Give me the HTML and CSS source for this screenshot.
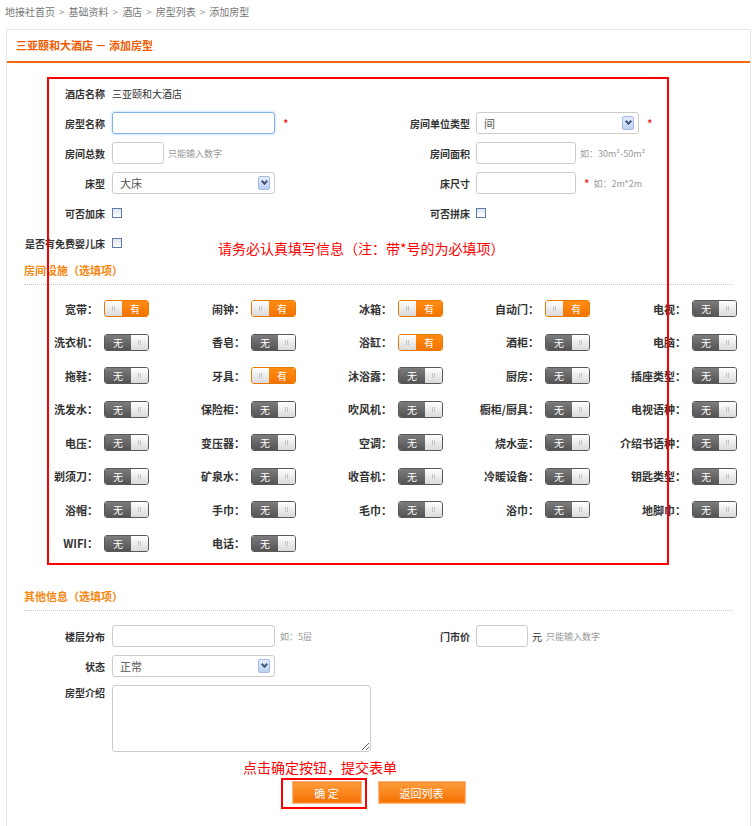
FILE: index.html
```html
<!DOCTYPE html>
<html lang="zh-CN">
  <head>
    <meta charset="UTF-8" />
    <title>添加房型</title>
    <link rel="stylesheet" href="styles.css">
  </head>
  <body>
    <div class="crumb">
      地接社首页<span class="sep">&gt;</span>基础资料<span class="sep">&gt;</span>酒店<span class="sep">&gt;</span>房型列表<span class="sep">&gt;</span>添加房型
    </div>

    <div class="panel">
      <div class="panel-head">三亚颐和大酒店 － 添加房型</div>

      <!-- basic info -->
      <div class="form">
        <div class="row">
          <div class="field"><label>酒店名称</label><span class="val">三亚颐和大酒店</span></div>
        </div>
        <div class="row">
          <div class="field"><label>房型名称</label><span class="input w163 focus"></span><span class="req">*</span></div>
          <div class="field right"><label>房间单位类型</label><span class="input select w163">间<i class="arrow"></i></span><span class="req">*</span></div>
        </div>
        <div class="row">
          <div class="field"><label>房间总数</label><span class="input w52"></span><span class="hint">只能输入数字</span></div>
          <div class="field right"><label>房间面积</label><span class="input w100"></span><span class="hint">如：30m²-50m²</span></div>
        </div>
        <div class="row">
          <div class="field"><label>床型</label><span class="input select w163">大床<i class="arrow"></i></span></div>
          <div class="field right"><label>床尺寸</label><span class="input w100"></span><span class="req">*</span><span class="hint">如：2m*2m</span></div>
        </div>
        <div class="row">
          <div class="field"><label>可否加床</label><span class="check"></span></div>
          <div class="field right"><label>可否拼床</label><span class="check"></span></div>
        </div>
        <div class="row">
          <div class="field"><label>是否有免费婴儿床</label><span class="check"></span></div>
        </div>
      </div>

      <h3 class="sec">房间设施（选填项）</h3>
      <div class="facilities">
        <div class="fac"><label>宽带：</label><span class="sw on"><i></i><b>有</b></span></div>
        <div class="fac"><label>闹钟：</label><span class="sw on"><i></i><b>有</b></span></div>
        <div class="fac"><label>冰箱：</label><span class="sw on"><i></i><b>有</b></span></div>
        <div class="fac"><label>自动门：</label><span class="sw on"><i></i><b>有</b></span></div>
        <div class="fac"><label>电视：</label><span class="sw"><b>无</b><i></i></span></div>

        <div class="fac"><label>洗衣机：</label><span class="sw"><b>无</b><i></i></span></div>
        <div class="fac"><label>香皂：</label><span class="sw"><b>无</b><i></i></span></div>
        <div class="fac"><label>浴缸：</label><span class="sw on"><i></i><b>有</b></span></div>
        <div class="fac"><label>酒柜：</label><span class="sw"><b>无</b><i></i></span></div>
        <div class="fac"><label>电脑：</label><span class="sw"><b>无</b><i></i></span></div>

        <div class="fac"><label>拖鞋：</label><span class="sw"><b>无</b><i></i></span></div>
        <div class="fac"><label>牙具：</label><span class="sw on"><i></i><b>有</b></span></div>
        <div class="fac"><label>沐浴露：</label><span class="sw"><b>无</b><i></i></span></div>
        <div class="fac"><label>厨房：</label><span class="sw"><b>无</b><i></i></span></div>
        <div class="fac"><label>插座类型：</label><span class="sw"><b>无</b><i></i></span></div>

        <div class="fac"><label>洗发水：</label><span class="sw"><b>无</b><i></i></span></div>
        <div class="fac"><label>保险柜：</label><span class="sw"><b>无</b><i></i></span></div>
        <div class="fac"><label>吹风机：</label><span class="sw"><b>无</b><i></i></span></div>
        <div class="fac"><label>橱柜/厨具：</label><span class="sw"><b>无</b><i></i></span></div>
        <div class="fac"><label>电视语种：</label><span class="sw"><b>无</b><i></i></span></div>

        <div class="fac"><label>电压：</label><span class="sw"><b>无</b><i></i></span></div>
        <div class="fac"><label>变压器：</label><span class="sw"><b>无</b><i></i></span></div>
        <div class="fac"><label>空调：</label><span class="sw"><b>无</b><i></i></span></div>
        <div class="fac"><label>烧水壶：</label><span class="sw"><b>无</b><i></i></span></div>
        <div class="fac"><label>介绍书语种：</label><span class="sw"><b>无</b><i></i></span></div>

        <div class="fac"><label>剃须刀：</label><span class="sw"><b>无</b><i></i></span></div>
        <div class="fac"><label>矿泉水：</label><span class="sw"><b>无</b><i></i></span></div>
        <div class="fac"><label>收音机：</label><span class="sw"><b>无</b><i></i></span></div>
        <div class="fac"><label>冷暖设备：</label><span class="sw"><b>无</b><i></i></span></div>
        <div class="fac"><label>钥匙类型：</label><span class="sw"><b>无</b><i></i></span></div>

        <div class="fac"><label>浴帽：</label><span class="sw"><b>无</b><i></i></span></div>
        <div class="fac"><label>手巾：</label><span class="sw"><b>无</b><i></i></span></div>
        <div class="fac"><label>毛巾：</label><span class="sw"><b>无</b><i></i></span></div>
        <div class="fac"><label>浴巾：</label><span class="sw"><b>无</b><i></i></span></div>
        <div class="fac"><label>地脚巾：</label><span class="sw"><b>无</b><i></i></span></div>

        <div class="fac"><label>WIFI：</label><span class="sw"><b>无</b><i></i></span></div>
        <div class="fac"><label>电话：</label><span class="sw"><b>无</b><i></i></span></div>
      </div>

      <h3 class="sec sec2">其他信息（选填项）</h3>
      <div class="form form2">
        <div class="row">
          <div class="field"><label>楼层分布</label><span class="input w163"></span><span class="hint wide">如：5层</span></div>
          <div class="field right"><label>门市价</label><span class="input w52"></span><span class="unit">元</span><span class="hint">只能输入数字</span></div>
        </div>
        <div class="row">
          <div class="field"><label>状态</label><span class="input select w163">正常<i class="arrow"></i></span></div>
        </div>
        <div class="row tall">
          <div class="field"><label>房型介绍</label><textarea class="intro"></textarea></div>
        </div>
      </div>

      <div class="actions">
        <button class="btn">确 定</button>
        <button class="btn wide">返回列表</button>
      </div>
    </div>

    <!-- red annotations drawn over the page -->
    <div class="mark-box"></div>
    <div class="note">请务必认真填写信息（注：带*号的为必填项）</div>
    <div class="note note2">点击确定按钮，提交表单</div>
    <div class="mark-btn"></div>
  </body>
</html>
```

FILE: styles.css
```css
* {
  box-sizing: border-box;
}
body {
  position: relative;
  margin: 0;
  background-color: #fff;
  color: #333;
  font-family: "Noto Sans CJK SC", "Liberation Sans", sans-serif;
  font-size: 10px;
}
.crumb {
  height: 29px;
  padding: 6px 0 0 5px;
  color: #777;
  font-size: 10px;
  line-height: 12px;
}
.crumb .sep {
  margin: 0 4px;
  color: #999;
}
.panel {
  margin: 0 4px 0 6px;
  padding-bottom: 40px;
  border: 1px solid #e6e6e6;
  border-bottom: none;
}
.panel-head {
  height: 33px;
  padding-left: 9px;
  line-height: 31px;
  border-bottom: 2px solid #f26a10;
  color: #f05a00;
  font-size: 11px;
  font-weight: bold;
}
.form {
  padding-top: 19px;
}
.row {
  display: flex;
  align-items: center;
  height: 22px;
  margin-bottom: 8px;
}
.field {
  display: flex;
  align-items: center;
  width: 364px;
}
.field label {
  flex-shrink: 0;
  width: 98px;
  margin-right: 7px;
  text-align: right;
  font-weight: bold;
}
.field.right label {
  width: 99px;
  margin-right: 6px;
}
.val {
  color: #333;
}
.input {
  display: flex;
  height: 22px;
  background-color: #fff;
  border: 1px solid #ccc;
  border-radius: 3px;
}
.w163 {
  width: 163px;
}
.w100 {
  width: 100px;
}
.w52 {
  width: 52px;
}
.input.focus {
  border-color: #80b4e8;
  box-shadow: 0 0 3px #a8cff4;
}
.select {
  align-items: center;
  justify-content: space-between;
  padding: 0 4px 0 7px;
  color: #555;
  font-size: 11px;
}
.arrow {
  position: relative;
  width: 12px;
  height: 14px;
  border: 1px solid #a4bbe3;
  border-radius: 2px;
  background: linear-gradient(#e6edfb, #bcd0f3);
}
.arrow::after {
  content: "";
  position: absolute;
  left: 3px;
  top: 2px;
  width: 3px;
  height: 3px;
  border-right: 2px solid #44577c;
  border-bottom: 2px solid #44577c;
  transform: rotate(45deg);
}
.req {
  margin-left: 8px;
  color: #f00;
  font-size: 12px;
}
.hint {
  margin-left: 4px;
  color: #999;
  font-size: 9px;
}
.hint.wide {
  margin-left: 5px;
}
.unit {
  margin-left: 4px;
  color: #333;
  font-size: 10px;
}
.check {
  width: 10px;
  height: 10px;
  border: 1px solid #5f7aa5;
  background: linear-gradient(#dde5ef, #fff);
}
.sec {
  height: 23px;
  margin: 3px 18px 0 17px;
  line-height: 16px;
  border-bottom: 1px dotted #c8c8c8;
  color: #f7870f;
  font-size: 11px;
  font-weight: bold;
}
.sec2 {
  margin-top: 28px;
}
.facilities {
  display: grid;
  grid-template-columns: repeat(4, 147px) 125px;
  grid-auto-rows: 33.5px;
  align-items: center;
  margin: 7px 0 0 17px;
}
.fac {
  display: flex;
  align-items: center;
}
.fac label {
  width: 74px;
  margin-right: 6px;
  text-align: right;
  color: #333;
  font-size: 11px;
  font-weight: bold;
}
.sw {
  display: flex;
  width: 45px;
  height: 17px;
  overflow: hidden;
  border: 1px solid #585858;
  border-radius: 3px;
}
.sw b {
  flex: 1;
  background: linear-gradient(#7c7c7c, #545454);
  color: #fff;
  font-size: 10px;
  font-weight: normal;
  line-height: 15px;
  text-align: center;
}
.sw i {
  position: relative;
  width: 17px;
  background: linear-gradient(#fff, #dadada);
}
.sw i::before {
  content: "";
  position: absolute;
  left: 7px;
  top: 5px;
  width: 1px;
  height: 5px;
  border-left: 1px solid #c4c4c4;
  border-right: 1px solid #c4c4c4;
}
.sw.on {
  border-color: #e77800;
}
.sw.on b {
  background: linear-gradient(#ff8c14, #f27400);
}
.form2 {
  padding-top: 14px;
}
.row.tall {
  align-items: flex-start;
  height: auto;
  margin-bottom: 0;
}
.row.tall .field {
  align-items: flex-start;
}
.row.tall label {
  line-height: 16px;
}
.intro {
  width: 486px;
  height: 67px;
  margin: 0;
  border: 1px solid #ccc;
  border-radius: 3px;
}
.actions {
  display: flex;
  justify-content: center;
  gap: 16px;
  margin-top: 29px;
}
.btn {
  width: 70px;
  height: 23px;
  padding: 0;
  background: linear-gradient(#ff9e3c, #f46e00);
  border: 1px solid #fcb684;
  box-shadow: inset 0 0 0 1px #fb8a2a;
  color: #fff;
  font-family: inherit;
  font-size: 11px;
}
.btn.wide {
  width: 88px;
}
.mark-box {
  position: absolute;
  left: 47px;
  top: 77px;
  width: 622px;
  height: 488px;
  border: 2px solid #f00;
}
.note {
  position: absolute;
  left: 218px;
  top: 239px;
  color: #f00;
  font-size: 14px;
  line-height: 18px;
}
.note2 {
  left: 243px;
  top: 758px;
}
.mark-btn {
  position: absolute;
  left: 281px;
  top: 778px;
  width: 86px;
  height: 31px;
  border: 2px solid #f00;
}
```
